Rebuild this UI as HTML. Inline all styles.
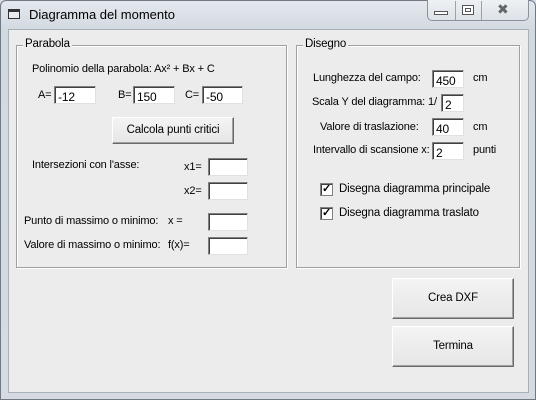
<!DOCTYPE html>
<html><head><meta charset="utf-8"><style>
*{margin:0;padding:0;box-sizing:border-box}
body{width:536px;height:400px;overflow:hidden;background:#d9dee5;font-family:"Liberation Sans",sans-serif;font-size:11px;letter-spacing:-0.15px;color:#000;position:relative}
.win{position:absolute;left:0;top:0;width:536px;height:400px;border:1px solid #707a85;border-radius:6px 6px 0 0;background:linear-gradient(#e4e8ee,#d3d9e1 30px,#d6dbe2)}
.a{position:absolute;white-space:nowrap;line-height:13px}
.client{position:absolute;left:8px;top:29px;width:521px;height:364px;background:#ececec;border:1px solid #a8b0b8}
.fr{position:absolute;border:1px solid #a0a0a0;box-shadow:inset 1px 1px 0 #fff,1px 1px 0 #fff}
.lg{position:absolute;background:#ececec;padding:0 2px;top:-8px;left:6px;font-size:11.5px}
.in{position:absolute;background:#fff;border-top:1px solid #808080;border-left:1px solid #808080;border-right:1px solid #e0e0e0;border-bottom:1px solid #e0e0e0;box-shadow:inset 1px 1px 0 #404040;font-size:12px;padding:3px 0 0 3px;line-height:14px}
.bt{position:absolute;background:linear-gradient(#f4f4f4,#e6e6e6);border:1px solid;border-color:#fff #6a6a6a #6a6a6a #fff;box-shadow:inset -1px -1px 0 #a0a0a0;text-align:center;font-size:11.5px}
.cb{position:absolute;width:13px;height:13px;background:#fff;border:1px solid #808080;box-shadow:inset 1px 1px 0 #404040;font-size:11px;line-height:11px;text-align:center;font-weight:bold}
</style></head><body>
<div class="win"></div>
<div class="a" style="left:8px;top:9px;width:12px;height:10px;border:1px solid #333;border-top-width:3px;background:#e8ecf0"></div>
<div class="a" style="left:29px;top:8px;font-size:13px;letter-spacing:0">Diagramma del momento</div>
<div class="a" style="left:427px;top:0;width:102px;height:21px;border:1px solid #8a939c;border-top:none;border-radius:0 0 5px 5px;background:linear-gradient(#eef1f4,#dde2e8)"></div>
<div class="a" style="left:455px;top:1px;width:1px;height:19px;background:#9aa3ac"></div>
<div class="a" style="left:481px;top:1px;width:1px;height:19px;background:#9aa3ac"></div>
<div class="a" style="left:434px;top:11px;width:14px;height:4px;border:1px solid #555;background:#fff"></div>
<div class="a" style="left:462px;top:5px;width:12px;height:10px;border:1px solid #555;background:#fff"><div style="margin:2px;height:4px;border:1px solid #555"></div></div>
<div class="a" style="left:497px;top:3px;font-size:14px;color:#666">&#10006;</div>
<div class="client"></div>

<div class="fr" style="left:16px;top:45px;width:271px;height:223px"><div class="lg">Parabola</div></div>
<div class="fr" style="left:296px;top:45px;width:224px;height:223px"><div class="lg">Disegno</div></div>

<div class="a" style="left:32px;top:63px">Polinomio della parabola: Ax² + Bx + C</div>
<div class="a" style="left:38px;top:89px">A=</div><div class="in" style="left:54px;top:86px;width:42px;height:18px">-12</div>
<div class="a" style="left:118px;top:89px">B=</div><div class="in" style="left:133px;top:86px;width:42px;height:18px">150</div>
<div class="a" style="left:185px;top:89px">C=</div><div class="in" style="left:202px;top:86px;width:41px;height:18px">-50</div>
<div class="bt" style="left:112px;top:117px;width:122px;height:27px;line-height:24px">Calcola punti critici</div>
<div class="a" style="left:32px;top:159px">Intersezioni con l'asse:</div>
<div class="a" style="left:184px;top:161px">x1=</div><div class="in" style="left:208px;top:158px;width:40px;height:18px"></div>
<div class="a" style="left:184px;top:185px">x2=</div><div class="in" style="left:208px;top:182px;width:40px;height:18px"></div>
<div class="a" style="left:24px;top:215px">Punto di massimo o minimo:</div>
<div class="a" style="left:168px;top:215px">x =</div><div class="in" style="left:208px;top:213px;width:40px;height:18px"></div>
<div class="a" style="left:24px;top:239px">Valore di massimo o minimo:</div>
<div class="a" style="left:168px;top:239px">f(x)=</div><div class="in" style="left:208px;top:237px;width:40px;height:18px"></div>

<div class="a" style="left:313px;top:72px">Lunghezza del campo:</div><div class="in" style="left:432px;top:70px;width:32px;height:18px">450</div><div class="a" style="left:473px;top:72px">cm</div>
<div class="a" style="left:312px;top:96px">Scala Y del diagramma:</div><div class="a" style="left:428px;top:96px">1/</div><div class="in" style="left:441px;top:94px;width:23px;height:18px">2</div>
<div class="a" style="left:320px;top:121px">Valore di traslazione:</div><div class="in" style="left:432px;top:118px;width:32px;height:18px">40</div><div class="a" style="left:473px;top:121px">cm</div>
<div class="a" style="left:313px;top:144px">Intervallo di scansione x:</div><div class="in" style="left:432px;top:142px;width:32px;height:18px">2</div><div class="a" style="left:473px;top:144px">punti</div>
<div class="cb" style="left:320px;top:183px">✓</div><div class="a" style="left:339px;top:183px;font-size:11.5px">Disegna diagramma principale</div>
<div class="cb" style="left:320px;top:207px">✓</div><div class="a" style="left:339px;top:207px;font-size:11.5px">Disegna diagramma traslato</div>

<div class="bt" style="left:392px;top:278px;width:122px;height:41px;line-height:38px">Crea DXF</div>
<div class="bt" style="left:392px;top:326px;width:122px;height:41px;line-height:38px">Termina</div>
</body></html>
